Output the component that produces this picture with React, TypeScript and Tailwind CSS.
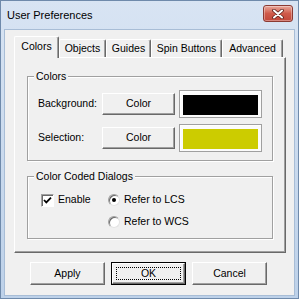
import React from 'react';

const raised =
  "bg-[#f0f0f0] border border-t-white border-l-white border-r-[#696969] border-b-[#696969] shadow-[inset_-1px_-1px_0_#a0a0a0]";

function CloseButton() {
  return (
    <div className="w-[30px] h-[17px] rounded-[3px] border border-[#8b3a33] bg-gradient-to-b from-[#e8a89c] via-[#cf5a4a] to-[#c2473a] flex items-center justify-center shadow-[inset_0_0_0_1px_rgba(255,255,255,0.35)]">
      <svg width="12" height="10" viewBox="0 0 12 10">
        <path d="M2 1.5 L10 8.5 M10 1.5 L2 8.5" stroke="#5a1f1a" strokeWidth="3.6" strokeLinecap="round" />
        <path d="M2 1.5 L10 8.5 M10 1.5 L2 8.5" stroke="#ffffff" strokeWidth="2" strokeLinecap="round" />
      </svg>
    </div>
  );
}

function Tab({ label, width, selected }: { label: string; width: string; selected?: boolean }) {
  if (selected) {
    return (
      <div
        className={`${width} h-[22px] -mb-px relative z-10 bg-[#f0f0f0] border-t border-l border-r border-t-white border-l-white border-r-[#696969] shadow-[inset_-1px_0_0_#a0a0a0] rounded-t-[2px] flex items-center justify-center pb-[2px]`}
      >
        {label}
      </div>
    );
  }
  return (
    <div
      className={`${width} h-[18px] bg-[#f0f0f0] border-t border-l border-r border-t-white border-l-white border-r-[#696969] shadow-[inset_-1px_0_0_#a0a0a0] rounded-t-[2px] flex items-center justify-center`}
    >
      {label}
    </div>
  );
}

function GroupBox({ title, className, children }: { title: string; className: string; children: React.ReactNode }) {
  return (
    <div
      className={`relative w-[246px] border border-[#a0a0a0] shadow-[inset_1px_1px_0_#ffffff,1px_1px_0_#ffffff] ${className}`}
    >
      <span className="absolute -top-[7px] left-[6px] px-[2px] bg-[#f0f0f0] leading-[13px]">{title}</span>
      {children}
    </div>
  );
}

function ColorRow({ label, swatch, className }: { label: string; swatch: string; className?: string }) {
  return (
    <div className={`flex items-center h-[28px] pl-[10px] ${className ?? ""}`}>
      <span className="w-[64px]">{label}</span>
      <div className={`${raised} w-[73px] h-[22px] flex items-center justify-center`}>Color</div>
      <div className="ml-[4px] w-[83px] h-[28px] border border-[#a0a0a0] bg-[#fbfbfb] shadow-[inset_1px_1px_0_#ffffff] pt-[4px] pl-[3px]">
        <div className={`w-[75px] h-[20px] ${swatch}`} />
      </div>
    </div>
  );
}

function Radio({ checked }: { checked?: boolean }) {
  return (
    <div className="w-[12px] h-[12px] rounded-full border border-t-[#a0a0a0] border-l-[#a0a0a0] border-r-[#e3e3e3] border-b-[#e3e3e3] bg-white shadow-[inset_1px_1px_0_#696969] flex items-center justify-center">
      {checked && <div className="w-[4px] h-[4px] rounded-full bg-black" />}
    </div>
  );
}

export default function App() {
  return (
    <div className="w-[299px] h-[299px] flex flex-col border border-[#6f8aab] bg-gradient-to-b from-[#d8e4f3] to-[#bdd1e9] font-['Liberation_Sans',Arial,sans-serif] text-[10.5px] text-black overflow-hidden">
      {/* title bar */}
      <div className="h-[28px] shrink-0 flex justify-between pl-[6px] pr-[5px]">
        <span className="text-[11px] leading-[13px] mt-[8px]">User Preferences</span>
        <div className="mt-[4px]">
          <CloseButton />
        </div>
      </div>

      <div className="flex-1 mx-[3px] mb-[2px] bg-[#f0f0f0] border border-[#a8bdd6] pt-[6px] pl-[9px]">
        {/* tabs */}
        <div className="h-[21px] flex items-end">
          <Tab label="Colors" width="w-[45px]" selected />
          <Tab label="Objects" width="w-[47px]" />
          <Tab label="Guides" width="w-[45px]" />
          <Tab label="Spin Buttons" width="w-[71px]" />
          <Tab label="Advanced" width="w-[61px]" />
        </div>

        {/* panel */}
        <div className="w-[272px] h-[196px] border border-t-white border-l-white border-r-[#696969] border-b-[#696969] shadow-[inset_-1px_-1px_0_#a0a0a0] pl-[12px]">
          <GroupBox title="Colors" className="h-[85px] mt-[18px] pt-[13px]">
            <ColorRow label="Background:" swatch="bg-black" />
            <ColorRow label="Selection:" swatch="bg-[#cccc00]" className="mt-[6px]" />
          </GroupBox>

          <GroupBox title="Color Coded Dialogs" className="h-[63px] mt-[15px] pt-[15px] pl-[13px]">
            <div className="grid grid-cols-[67px_auto] gap-y-[6px]">
              <div className="flex items-center h-[16px]">
                <div className="w-[13px] h-[13px] border border-t-[#a0a0a0] border-l-[#a0a0a0] border-r-white border-b-white bg-white shadow-[inset_1px_1px_0_#696969] flex items-center justify-center">
                  <svg width="9" height="9" viewBox="0 0 9 9">
                    <path d="M1 4 L3.3 6.4 L8 1.6" stroke="#000" strokeWidth="1.8" fill="none" />
                  </svg>
                </div>
                <span className="ml-[4px]">Enable</span>
              </div>
              <div className="flex items-center h-[16px]">
                <Radio checked />
                <span className="ml-[4px]">Refer to LCS</span>
              </div>
              <div />
              <div className="flex items-center h-[16px]">
                <Radio />
                <span className="ml-[4px]">Refer to WCS</span>
              </div>
            </div>
          </GroupBox>
        </div>

        {/* buttons */}
        <div className="flex gap-[6px] mt-[9px] ml-[16px]">
          <div className={`${raised} w-[75px] h-[23px] flex items-center justify-center`}>Apply</div>
          <div className="w-[75px] h-[23px] border border-black">
            <div className={`${raised} w-full h-full p-[3px]`}>
              <div className="w-full h-full border border-dotted border-black flex items-center justify-center">
                OK
              </div>
            </div>
          </div>
          <div className={`${raised} w-[75px] h-[23px] flex items-center justify-center`}>Cancel</div>
        </div>
      </div>
    </div>
  );
}
